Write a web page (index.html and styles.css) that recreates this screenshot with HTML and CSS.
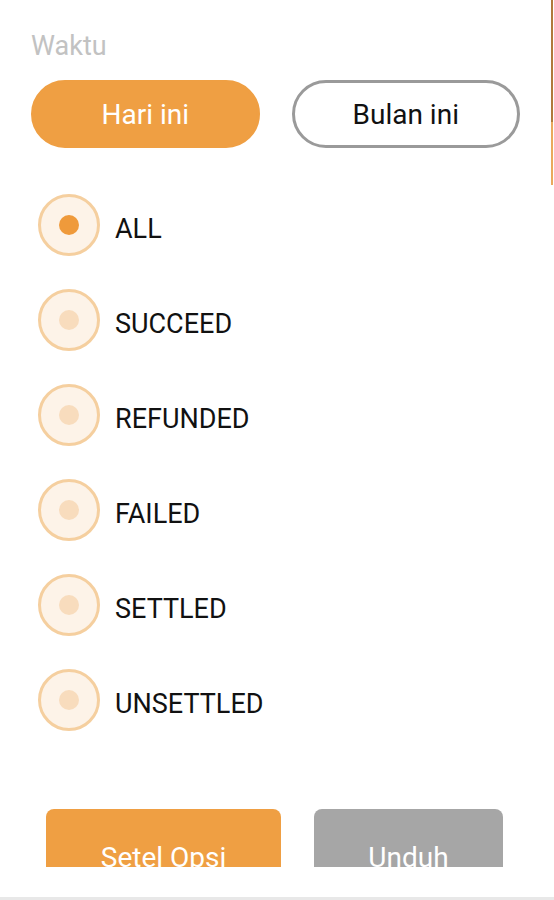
FILE: index.html
```html
<!DOCTYPE html>
<html lang="id">
<head>
    <meta charset="UTF-8">
    <meta name="viewport" content="width=device-width, initial-scale=1.0">
    <title>Filter Transaksi</title>
    <link rel="stylesheet" href="styles.css">
</head>
<body>

    <div class="sheet">
        <div class="section-title">Waktu</div>
        <div class="period-row">
            <button class="period-button active">Hari ini</button>
            <button class="period-button">Bulan ini</button>
        </div>

        <div class="status-list">
            <label class="status-row">
                <span class="radio checked"><span class="dot"></span></span>
                <span class="status-label">ALL</span>
            </label>
            <label class="status-row">
                <span class="radio"><span class="dot"></span></span>
                <span class="status-label">SUCCEED</span>
            </label>
            <label class="status-row">
                <span class="radio"><span class="dot"></span></span>
                <span class="status-label">REFUNDED</span>
            </label>
            <label class="status-row">
                <span class="radio"><span class="dot"></span></span>
                <span class="status-label">FAILED</span>
            </label>
            <label class="status-row">
                <span class="radio"><span class="dot"></span></span>
                <span class="status-label">SETTLED</span>
            </label>
            <label class="status-row">
                <span class="radio"><span class="dot"></span></span>
                <span class="status-label">UNSETTLED</span>
            </label>
        </div>

        <div class="actions">
            <button class="action-button reset">Setel Opsi</button>
            <button class="action-button download">Unduh</button>
        </div>
    </div>

    <div class="scroll-thumb"></div>
    <div class="bottom-line"></div>

</body>
</html>
```

FILE: styles.css
```css
body {
    font-family: Roboto, "Noto Sans", sans-serif;
    margin: 0;
    background-color: #fff;
    height: 900px;
    overflow: hidden;
    position: relative;
}

.sheet {
    padding: 30px 34px 0 31px;
}

.section-title {
    font-size: 27px;
    color: #c2c2c2;
    line-height: 32px;
}

.period-row {
    display: flex;
    gap: 32px;
    margin-top: 18px;
}

.period-button {
    flex: 1;
    height: 68px;
    border-radius: 34px;
    font-family: inherit;
    font-size: 28px;
    border: 3px solid #9a9a9a;
    background-color: #fff;
    color: #111;
    padding-top: 2px;
}

.period-button.active {
    background-color: #ef9f43;
    border-color: #ef9f43;
    color: #fff;
}

.status-list {
    display: flex;
    flex-direction: column;
    margin-top: 29px;
}

.status-row {
    display: flex;
    align-items: center;
    gap: 15px;
    height: 95px;
    padding-left: 7px;
}

.radio {
    width: 62px;
    height: 62px;
    box-sizing: border-box;
    border: 3px solid #f5cf9f;
    border-radius: 50%;
    background-color: #fdf3e8;
    display: flex;
    align-items: center;
    justify-content: center;
}

.dot {
    width: 20px;
    height: 20px;
    border-radius: 50%;
    background-color: #f8dcbd;
}

.radio.checked .dot {
    background-color: #ef9a3b;
}

.status-label {
    font-size: 27px;
    color: #111;
    padding-top: 8px;
}

.actions {
    display: flex;
    margin: 62px 0 0 15px;
    height: 58px;
    overflow: hidden;
}

.action-button {
    height: 80px;
    border: none;
    border-radius: 8px;
    font-family: inherit;
    font-size: 28px;
    line-height: 1;
    color: #fff;
    padding-top: 18px;
}

.reset {
    width: 235px;
    background-color: #ef9f43;
}

.download {
    width: 189px;
    margin-left: 33px;
    background-color: #a6a6a6;
}

.scroll-thumb {
    position: absolute;
    top: 0;
    right: 1px;
    width: 2px;
    height: 185px;
    background: linear-gradient(#b07a3c 0, #b07a3c 122px, #e9a95e 122px);
}

.bottom-line {
    position: absolute;
    left: 0;
    right: 0;
    bottom: 0;
    height: 3px;
    background-color: #e8e8e8;
}
```
